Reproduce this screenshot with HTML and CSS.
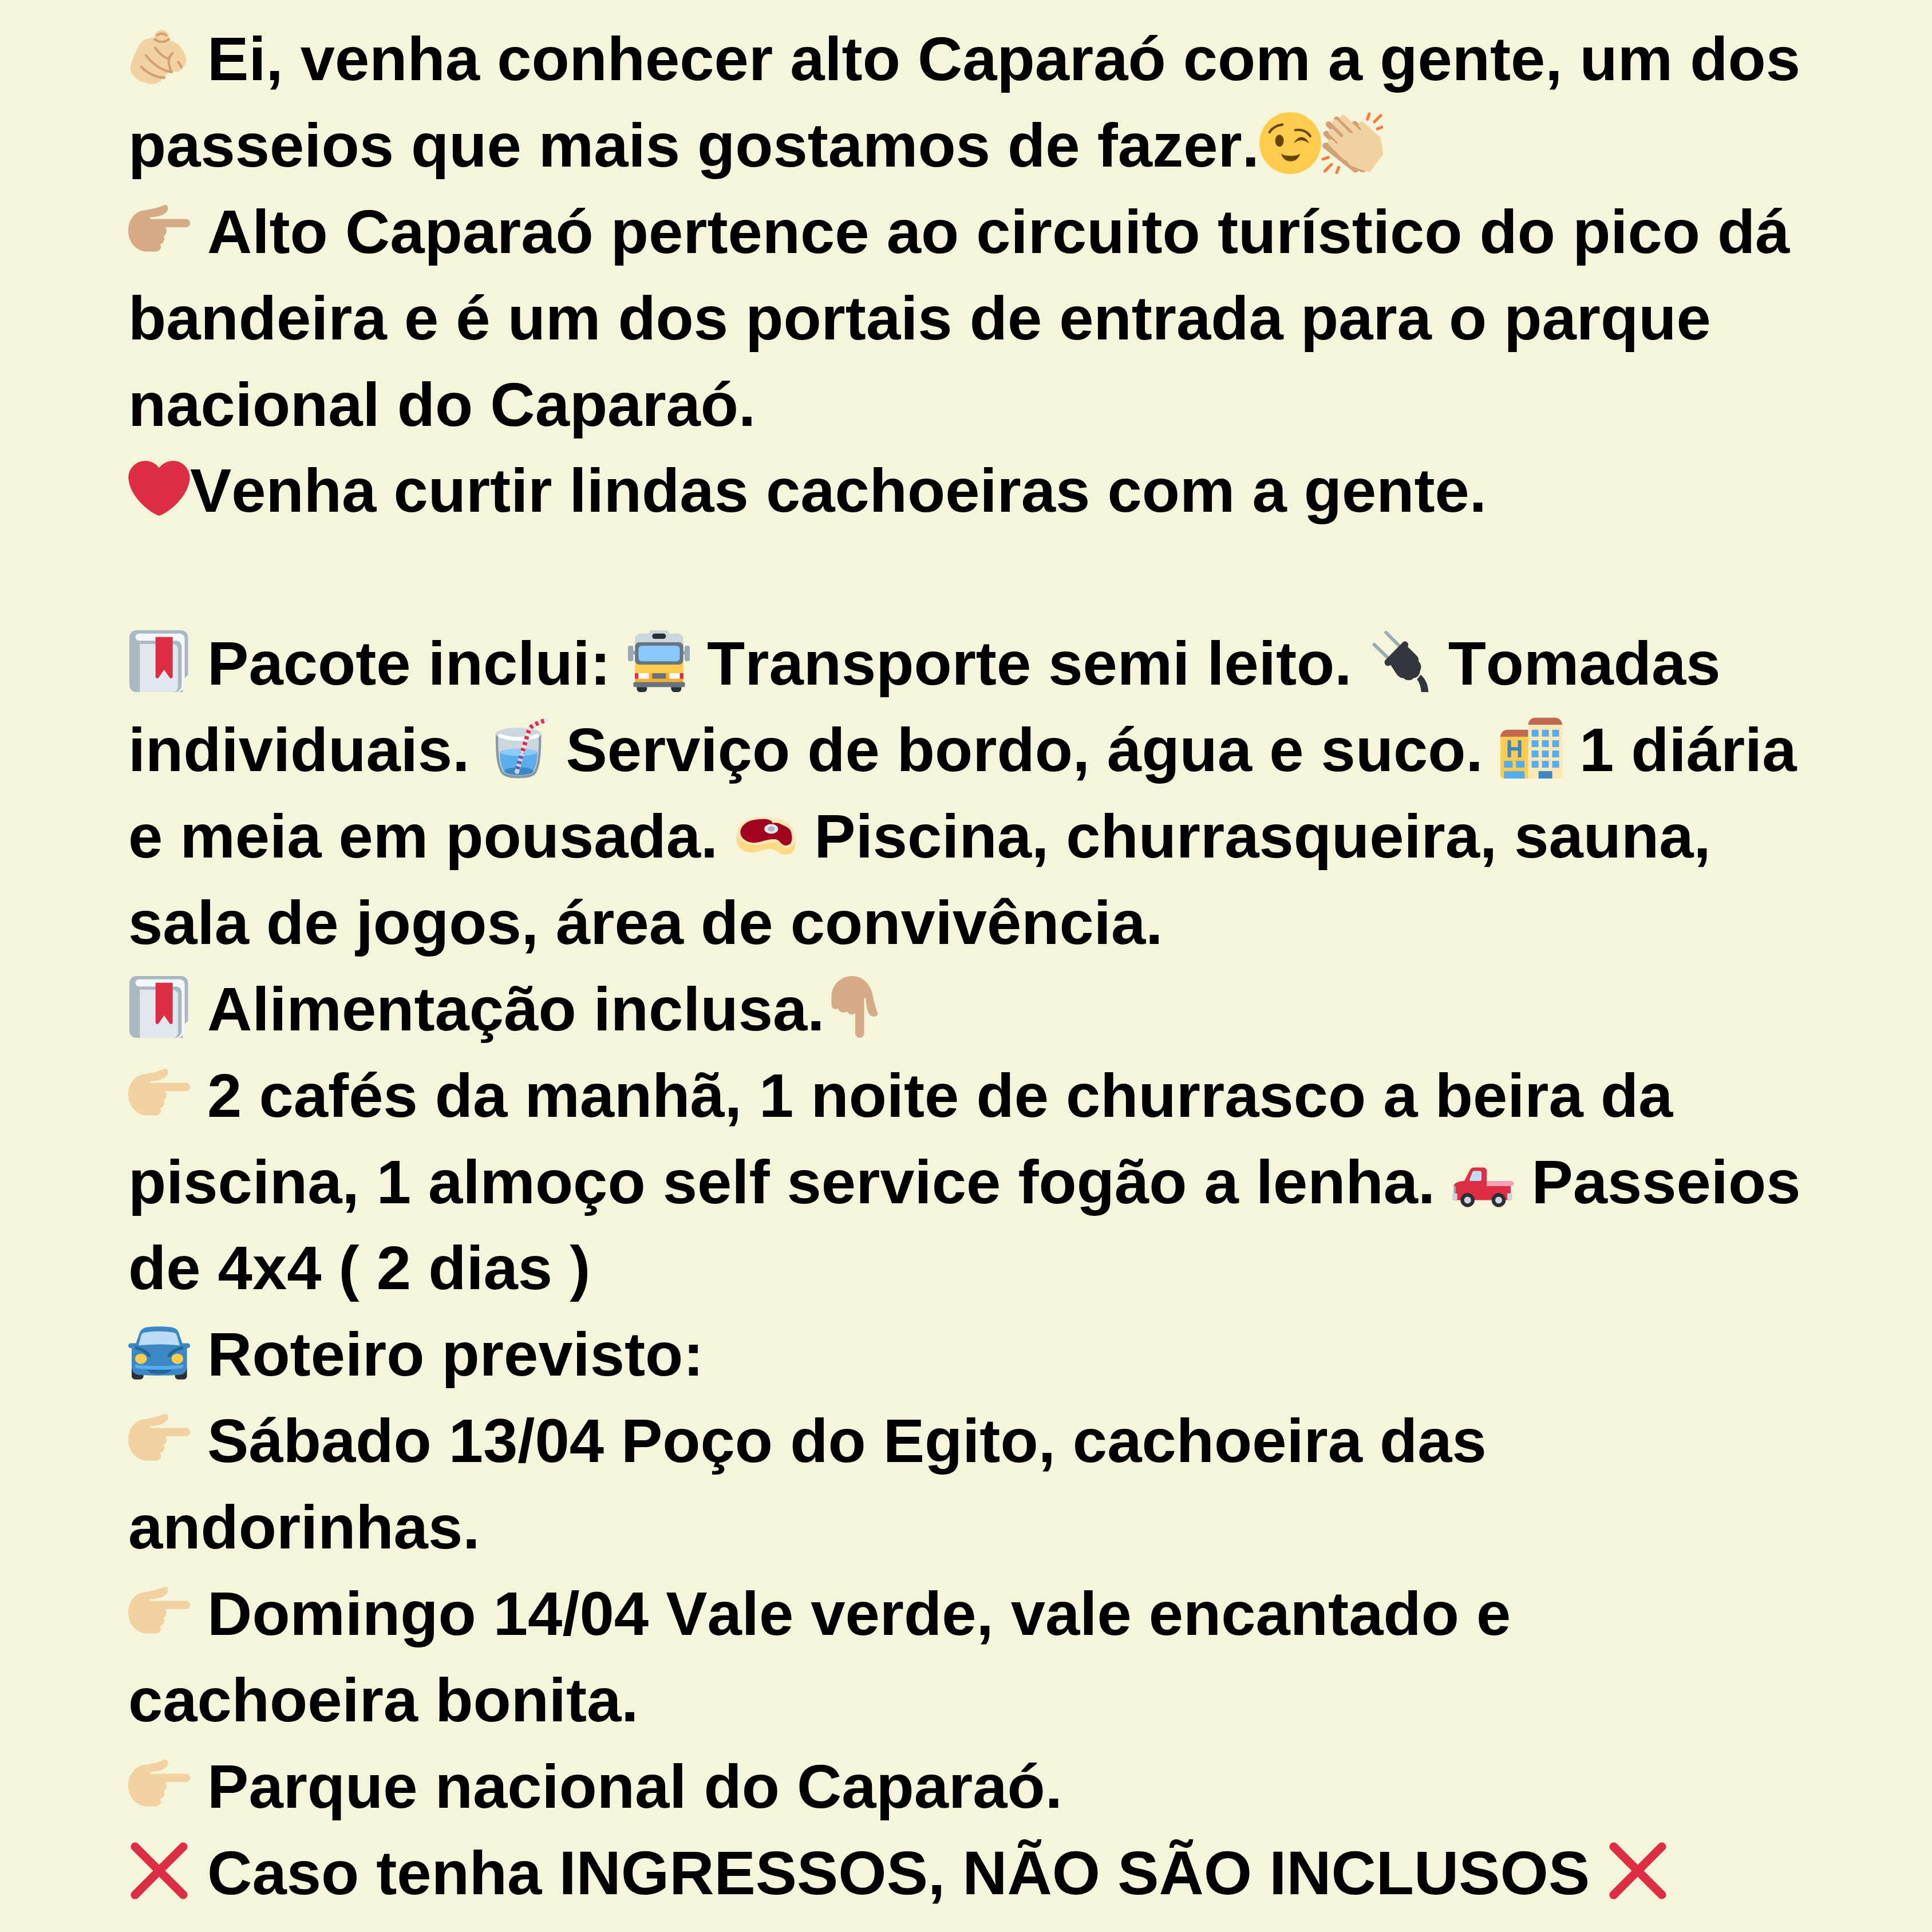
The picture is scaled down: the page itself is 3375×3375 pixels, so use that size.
FILE: index.html
```html
<!DOCTYPE html>
<html lang="pt-BR">
  <head>
    <meta charset="UTF-8" />
    <title>Alto Caparaó</title>
    <link rel="stylesheet" href="styles.css">
  </head>
  <body>
    <svg class="sprites" aria-hidden="true">
      <symbol id="hand-viewer" viewBox="0 0 36 36">
        <path fill="currentColor" d="M15 7.8C15 4.5 17 2.4 19.4 2.4c2.5 0 4.4 2 4.4 4.6 0 1 .3 1.5 1 1.8 2 .8 4 1.3 5.2 3 1.8 2.3 3.7 5 3.7 8 0 2.600-1.800 5-3.500 6.300-1.500 1-3.200.9-4.200.2-1.700.5-3.200 1.300-4.500 2.900-1.700 2.300-4 4.700-6.900 4.700-3.300 0-7.500-1.100-9.600-2.900-1.700-1.500-3.700-3.800-3.700-6.100 0-3.600 2.600-8.600 5-13.600.9-2 3-3.300 5.600-3.900 1.100-.2 1.600-.3 2.100-1z"/>
        <g fill="none" stroke="#D2A077" stroke-width="1.400" stroke-linecap="round">
          <path d="M15.400 7.800Q19.400 11 23.700 7.800"/>
          <path d="M16.700 5.600Q19.400 3.500 22.200 5.600"/>
          <path d="M15.600 12.800C17.500 15.500 20 18 23.100 19.200"/>
          <path d="M25.900 15.900C24 17.500 23 20 24 23.500Q24.400 25.500 25.300 26.700"/>
          <path d="M10.300 17.200C14 22 19 26 25.300 27"/>
          <path d="M7.600 23.900C11 27.500 15.500 30 21.100 30.300"/>
          <path d="M29.200 21.100L30.900 24.100"/>
        </g>
      </symbol>
      <symbol id="hand-right" viewBox="0 0 36 36">
        <path fill="currentColor" d="M8.900 6.800C13 6.300 17 5.300 20.500 3.900 22.200 3.200 23.200 4.200 23.200 5.600 23.200 8.500 19 10.700 13.300 10.800 12.500 10.900 12.500 11.800 13.300 11.800L33.600 11.800A2.450 2.450 0 0 1 33.600 16.700L21.600 16.700C22.800 18.500 22.500 21 20.500 21.900 21.800 23.500 20.600 26 18.600 26.600 19.800 28.500 18.500 30.800 16 30.800L11 30.800C4.500 30.800 0 25 0 18.800 0 12 4 7.500 8.900 6.800Z"/>
      </symbol>
      <symbol id="hand-down" viewBox="0 0 36 36">
        <path fill="currentColor" d="M16.100 0C9.500 0 4.200 5.500 4.200 11.700L4.200 16.700C4.200 19 6 19.600 8 19 8.800 21.500 11.800 21.800 13.200 20.600 14.500 22.800 16.800 23.200 18 21.400L18 33.400A2.600 2.600 0 0 0 23.200 33.400L23.200 13.200C23.200 12.500 24.100 12.500 24.100 13.200 24.300 18 25.300 21.500 26.700 22.800 28.200 24.200 31.600 23.500 31.100 21.700 29.600 17.500 28.800 14.500 28.300 11.700 27.300 5 22.500 0 16.100 0Z"/>
      </symbol>
      <symbol id="wink" viewBox="0 0 36 36">
        <circle fill="#FFCC4D" cx="18" cy="18" r="18"/>
        <ellipse fill="#664500" cx="11.700" cy="16.600" rx="2.500" ry="3.500"/>
        <path fill="#664500" d="M12.700 24C14 25.200 16 25.400 18.200 25.400 20.400 25.400 22.400 25.200 23.700 24 23.200 26.800 21 28.600 18.200 28.600 15.400 28.600 13.200 26.800 12.700 24Z"/>
        <g fill="none" stroke="#664500" stroke-width="1.400" stroke-linecap="round">
          <path d="M5.900 11.700Q8 8 13.400 7.200"/>
          <path d="M20.900 10.400Q26.500 9.500 29.600 13.900"/>
        </g>
        <path fill="#664500" d="M20 18C21.500 15.500 23 14.500 24.600 14.500 26.300 14.500 28 16 29 18 27 16.800 25.500 16.300 24.400 16.300 23 16.300 21.500 16.900 20 18Z"/>
      </symbol>
      <symbol id="clap" viewBox="0 0 36 36">
        <g fill="none" stroke="#FF7A3D" stroke-width="1.700" stroke-linecap="round">
          <path d="M28 1L26.900 4.100"/>
          <path d="M34.700 1.900L31 5.600"/>
          <path d="M35.700 8.600L32.700 9.700"/>
          <path d="M1 27.400L4.100 26.300"/>
          <path d="M2.100 34.300L6 30.400"/>
          <path d="M9 35.200L10.200 32.100"/>
        </g>
        <path fill="#D2A077" d="M1 20.500L23 34.800 25 35 27 33 12 16 2 18Z"/>
        <g fill="none" stroke="#D2A077" stroke-width="3.400" stroke-linecap="round">
          <path d="M2.400 19.500L20 33.500"/>
          <path d="M3 12.500L13 22"/>
          <path d="M4.300 7L15 17"/>
          <path d="M9 4.200L18 12"/>
          <path d="M19.500 6.800L24 11"/>
        </g>
        <path fill="#F3D2A2" d="M8 20L14 12 22 12 25.500 6.500 34.300 14.600 35.600 19.500 36 24.700 28.800 34.300Q28 35 26.500 34.500L22 33 17 31Z"/>
        <g fill="none" stroke="#F3D2A2" stroke-width="3.600" stroke-linecap="round">
          <path d="M12.800 3.400L22 12.500"/>
          <path d="M8.200 6L18 16"/>
          <path d="M6 11.500L16 21.500"/>
          <path d="M5.600 17.600L14 26"/>
          <path d="M23.500 7.300L30 14"/>
        </g>
      </symbol>
      <symbol id="heart" viewBox="0 0 36 36">
        <path fill="#DD2E44" d="M35.885 11.833c0-5.450-4.418-9.868-9.867-9.868-3.308 0-6.227 1.633-8.018 4.129-1.791-2.496-4.710-4.129-8.017-4.129-5.450 0-9.868 4.417-9.868 9.868 0 .772.098 1.520.266 2.241C1.751 22.587 11.216 31.568 18 34.034c6.783-2.466 16.249-11.447 17.617-19.959.170-.721.268-1.469.268-2.242z"/>
      </symbol>
      <symbol id="bookmark" viewBox="0 0 36 36">
        <path fill="#AAB8C2" d="M.7 4a4 4 0 0 1 4-4H30.800a4 4 0 0 1 4 4v22l-3 3v7H4.700a4 4 0 0 1-4-4z"/>
        <path fill="#F5F8FA" d="M6.300 1.900H30a2.900 2.900 0 0 1 2.900 2.900V31.500c0 2.500-2 4.500-4.500 4.500H6.800V6.100h-.5a2.100 2.100 0 0 1 0-4.200z"/>
        <path fill="#AAB8C2" d="M6.800 6.100H28a3.100 3.100 0 0 1 3.100 3.100V32a4 4 0 0 1-4 4H6.800z"/>
        <path fill="#E1E8ED" d="M6.800 8H26a3 3 0 0 1 3 3V33a3 3 0 0 1-3 3H6.800z"/>
        <path fill="#DD2E44" d="M15.900 3.900H25.900V27a1 1 0 0 1-1.800.6L20.900 23 17.700 27.600a1 1 0 0 1-1.800-.6z"/>
      </symbol>
      <symbol id="bus" viewBox="0 0 36 36">
        <path fill="#CCD6DD" d="M4.100 10V5a3.100 3.100 0 0 1 3.100-3.100H12.200V1.500A1.500 1.500 0 0 1 13.700 0H22.400A1.500 1.500 0 0 1 23.900 1.500V1.900H29.100A3.100 3.100 0 0 1 32.200 5V10Z"/>
        <rect fill="#292F33" x="14.100" y="1.900" width="8" height="3.100" rx="1.500"/>
        <rect fill="#99AAB5" x="0" y="9" width="3.100" height="9" rx="1"/>
        <rect fill="#99AAB5" x="33" y="9" width="3" height="9" rx="1"/>
        <rect fill="#99AAB5" x="3" y="12" width="1.200" height="2.200"/>
        <rect fill="#99AAB5" x="32.100" y="12" width="1.200" height="2.200"/>
        <rect fill="#FFCC4D" x="4.100" y="15" width="28.100" height="10"/>
        <rect fill="#FFAC33" x="4.100" y="25" width="28.100" height="6"/>
        <rect fill="#66757F" x="4.100" y="7" width="28.100" height="13" rx="2.500"/>
        <rect fill="#88C9F9" x="6.100" y="9" width="24.100" height="9.100" rx="2"/>
        <rect fill="#DD2E44" x="4" y="25" width="2.100" height="3.200"/>
        <rect fill="#FFF" x="6.100" y="25" width="6.100" height="3.200"/>
        <rect fill="#66757F" x="14.100" y="25" width="8" height="3.200"/>
        <rect fill="#FFF" x="24.100" y="25" width="6.100" height="3.200"/>
        <rect fill="#DD2E44" x="30.200" y="25" width="2.100" height="3.200"/>
        <rect fill="#66757F" x="3.100" y="30.200" width="30.100" height="2.900" rx="1"/>
        <path fill="#292F33" d="M5.100 33.100H11.100V34A2 2 0 0 1 9.100 36H7.100A2 2 0 0 1 5.100 34Z"/>
        <path fill="#292F33" d="M25.100 33.100H31.100V34A2 2 0 0 1 29.100 36H27.100A2 2 0 0 1 25.100 34Z"/>
      </symbol>
      <symbol id="plug" viewBox="0 0 36 36">
        <g fill="none" stroke="#99AAB5" stroke-width="1.900" stroke-linecap="round">
          <path d="M9.700 1.300L17.800 9.400"/>
          <path d="M2.800 8.300L11.100 16.300"/>
        </g>
        <path fill="#31373D" d="M30 25.800C32.800 28.500 34.400 32 34.400 36H30.300C30 33 29.200 30.500 27.800 28.600Z"/>
        <path fill="#31373D" d="M19.700 6.800A1.900 1.900 0 0 1 22.300 9.500L27.800 15C28.600 16 28.800 17 28.700 18.200 30.300 19.500 30.600 22 29.500 23.800 29.600 25.500 28 27.800 25.800 27.800 24.500 29.500 21.500 29.500 20 27.900 18.500 28 17.200 27 16.200 26L12.400 20.200A1.900 1.900 0 0 1 9.500 17.200Z"/>
      </symbol>
      <symbol id="cup" viewBox="0 0 36 36">
        <g transform="translate(2.900 0)">
          <path fill="#8899A6" d="M2.400 10C2.400 20 2.600 27 5.300 32.300 6.500 34.800 10 35.800 15.700 35.800 21.400 35.800 25 34.800 26.200 32.300 28.700 27 28.900 20 28.900 10Z"/>
          <path fill="#CCD6DD" d="M3.800 10.500C3.800 19 4 27 6.500 31.500 7.500 33.300 10 34.200 15.700 34.200 21.400 34.200 24 33.300 25 31.500 27.300 27 27.500 19 27.500 10.500Z"/>
          <ellipse fill="#CCD6DD" cx="15.650" cy="10" rx="13.250" ry="3.600"/>
          <path fill="#5DADEC" d="M4.800 20.500C4.900 24.500 5.400 28.500 6.900 31.200 7.800 33 10 33.900 15.700 33.900 21.400 33.900 23.600 33 24.600 31.200 26.100 28.500 26.600 24.500 26.700 20.500Z"/>
          <ellipse fill="#8CCAF7" cx="15.800" cy="20.700" rx="10.900" ry="2.100"/>
          <ellipse fill="#3B88C3" cx="15.900" cy="31.700" rx="8.500" ry="2.300"/>
          <path fill="none" stroke="#FFF" stroke-width="2.200" stroke-linecap="round" d="M5 11.100Q15.900 14.700 26.700 11.100"/>
          <path fill="none" stroke="#BBDDF5" stroke-width="2.600" stroke-linecap="round" d="M14.800 32L18.100 20"/>
          <path fill="none" stroke="#744EAA" stroke-width="2.600" stroke-dasharray="1.600 1.600" d="M15 30.500L18.100 20"/>
          <path fill="none" stroke="#E1E8ED" stroke-width="2.600" stroke-linecap="round" d="M18.100 20L21.400 9C22 6 24 4.600 31.800 1.900"/>
          <path fill="none" stroke="#DD2E44" stroke-width="2.600" stroke-dasharray="1.800 1.800" d="M18.100 20L21.400 9C22 6 24 4.600 31.800 1.900"/>
        </g>
      </symbol>
      <symbol id="hotel" viewBox="0 0 36 36">
        <path fill="#FFCC4D" d="M0 11.700H16.200V36H2A2 2 0 0 1 0 34Z"/>
        <path fill="#C1694F" d="M0 11.700A4.100 4.100 0 0 1 4.100 7.600H16.200V11.700Z"/>
        <path fill="#FFE8B6" d="M16.200 4.700H36V34A2 2 0 0 1 34 36H16.200Z"/>
        <path fill="#C1694F" d="M16.200 4.700A4.100 4.100 0 0 1 20.300.6H31.900A4.100 4.100 0 0 1 36 4.700Z"/>
        <g fill="#55ACEE">
          <rect x="18.200" y="7.600" width="4" height="4"/>
          <rect x="24.200" y="7.600" width="4" height="4"/>
          <rect x="30.200" y="7.600" width="4" height="4"/>
          <rect x="18.200" y="13.700" width="4" height="4"/>
          <rect x="24.200" y="13.700" width="4" height="4"/>
          <rect x="30.200" y="13.700" width="4" height="4"/>
          <rect x="18.200" y="19.700" width="4" height="4"/>
          <rect x="24.200" y="19.700" width="4" height="4"/>
          <rect x="30.200" y="19.700" width="4" height="4"/>
          <rect x="18.200" y="25.700" width="4" height="4"/>
          <rect x="24.200" y="25.700" width="4" height="4"/>
          <rect x="30.200" y="25.700" width="4" height="4"/>
          <rect x="2.100" y="25.700" width="5" height="4"/>
          <rect x="9.100" y="25.700" width="5" height="4"/>
          <rect x="2.100" y="31.700" width="12" height="4.300"/>
        </g>
        <g fill="#3B88C3">
          <rect x="22.200" y="31.700" width="8" height="4.300"/>
          <rect x="4.200" y="13.700" width="2" height="10"/>
          <rect x="10.200" y="13.700" width="2" height="10"/>
          <rect x="4.200" y="17.700" width="8" height="2"/>
        </g>
      </symbol>
      <symbol id="steak" viewBox="0 0 36 36">
        <path fill="#FFD983" d="M.9 17V21.700C1.200 24 2 25.500 3.600 26.800 6 28.500 8.500 28.900 10.900 28.700 14 28.500 17 26.700 19.800 26.700 22 26.700 23.500 27.500 24.800 28.300 26.500 29.500 28 30.200 29.800 30 32.500 29.800 34.500 28.500 34.900 26.100 35.200 24.500 35.100 22.500 35.100 21.100Z"/>
        <path fill="#FFE8B6" d="M.9 17C1.300 13.500 4.500 9.800 9.800 8.600 13 8 16.500 8 19.800 8.300 24.500 8.800 29.500 9.500 32 12.200 34.200 14.700 35.100 18 35.100 21.100 35.100 24.500 32.500 26.300 29.800 26.100 27 25.800 26 22.800 24.200 22.800 20 22.300 16.500 24.400 12 24.400 6.500 24.300 .9 21 .9 17Z"/>
        <path fill="#A0041E" d="M3.100 16.700C3.300 13.500 6.500 10.800 9.800 10 12.500 9.500 15.500 9 18.700 9.400 20.500 9.700 21.800 10.500 21.800 11.700 23.500 11.200 25.500 11.500 26.400 12.200 29.500 13.300 32 14.700 32.600 16.700 33.300 19 33.300 21 32.900 22.200 32.500 24 31 24.700 29.200 24.700 26.800 24.300 25.800 21.300 23.700 21.100 19 20.600 15 23.100 10.900 23.100 7 23 3 20.500 3.100 16.700Z"/>
        <ellipse fill="#E1E8ED" cx="21.100" cy="15" rx="4" ry="2.800"/>
        <ellipse fill="#AAB8C2" cx="21.100" cy="15" rx="2" ry="1.500"/>
      </symbol>
      <symbol id="pickup" viewBox="0 0 36 36">
        <path fill="#F7A1B4" d="M20 18.700H34.400A1.500 1.500 0 0 1 34.400 21.700H20Z"/>
        <path fill="#DD2E44" d="M.9 21.700C1 19.800 3.500 18.900 7 18.700L10.200 12.400C10.700 11.300 11.600 10.800 12.600 10.800H18.100A1.900 1.900 0 0 1 20 12.700V21.700H34V29.800H.9Z"/>
        <path fill="#BBDDF5" d="M12.600 12.800H16A1 1 0 0 1 17 13.800V17.700A1 1 0 0 1 16 18.700H10.800C10 18.700 9.900 18.200 10.200 17.500L11.600 13.800C12 13 12.200 12.800 12.600 12.800Z"/>
        <rect fill="#99AAB5" x=".9" y="21.700" width="1.100" height="4.100"/>
        <rect fill="#CCD6DD" x="0" y="25.800" width="2.900" height="4" rx=".7"/>
        <rect fill="#CCD6DD" x="32" y="25.800" width="3" height="4" rx=".7"/>
        <circle fill="#292F33" cx="8.900" cy="29.800" r="4.100"/>
        <circle fill="#CCD6DD" cx="8.900" cy="29.800" r="2"/>
        <circle fill="#292F33" cx="27" cy="29.800" r="4.100"/>
        <circle fill="#CCD6DD" cx="27" cy="29.800" r="2"/>
      </symbol>
      <symbol id="car" viewBox="0 0 36 36">
        <path fill="#292F33" d="M2 27H8.900V32A1.900 1.900 0 0 1 7 33.900H3.900A1.900 1.900 0 0 1 2 32Z"/>
        <path fill="#292F33" d="M27.200 27H34.200V32A1.900 1.900 0 0 1 32.300 33.900H29.100A1.900 1.900 0 0 1 27.200 32Z"/>
        <path fill="#3B88C3" d="M4.500 12.800L6.500 7C7.300 4.900 8.500 3.900 11 3.500 15 2.900 21 2.900 25 3.500 27.500 3.900 28.900 4.900 29.500 7L31.500 12.800H34.600A1.450 1.450 0 0 1 34.600 15.700H34.200V26C34.200 29 33 30.800 30 31.200 26 31.800 10 31.800 6 31.200 3.200 30.800 2 29 2 26V15.700H1.450A1.450 1.450 0 0 1 1.450 12.800Z"/>
        <path fill="#BBDDF5" d="M9.500 6.600C14 5.700 22 5.700 26.500 6.600 27.700 6.900 28.200 7.700 28.500 8.900L30 14.100C22 13.300 14 13.300 6.100 14.100L7.300 8.900C7.600 7.600 8.300 6.900 9.500 6.600Z"/>
        <path fill="none" stroke="#226699" stroke-width="1.800" stroke-linecap="round" d="M4.700 15.600C8 16.200 11 18 12.200 20"/>
        <path fill="none" stroke="#226699" stroke-width="1.800" stroke-linecap="round" d="M31.300 15.600C28 16.200 25 18 23.900 20"/>
        <ellipse fill="#FFCC4D" cx="7.400" cy="21.900" rx="3.400" ry="3"/>
        <ellipse fill="#FFCC4D" cx="28.600" cy="21.900" rx="3.400" ry="3"/>
        <path fill="#55ACEE" d="M3.900 25.700C3.900 24.900 4.500 25 5 25.300 12 26.300 24 26.300 31 25.300 31.700 25 32.200 24.900 32.200 25.700 32.200 26.800 31.500 27.300 30.500 27.500 23 28.400 13 28.400 5.500 27.500 4.500 27.300 3.900 26.800 3.900 25.700Z"/>
        <path fill="#226699" d="M11.100 28.100C15 28.500 21 28.500 25 28.100 24.500 30 21.500 30.800 18 30.800 14.500 30.800 11.500 30 11.100 28.100Z"/>
      </symbol>
      <symbol id="cross" viewBox="0 0 36 36">
        <path fill="#DD2E44" d="M21.533 18.002L33.768 5.768c.976-.976.976-2.559 0-3.535-.977-.977-2.559-.977-3.536 0L17.998 14.466 5.764 2.233c-.976-.977-2.560-.977-3.535 0-.977.976-.977 2.559 0 3.535l12.234 12.234L2.201 30.265c-.977.977-.977 2.559 0 3.535.488.488 1.128.732 1.768.732s1.280-.244 1.768-.732l12.262-12.263 12.234 12.234c.488.488 1.128.732 1.768.732.640 0 1.279-.244 1.768-.732.976-.977.976-2.559 0-3.535L21.533 18.002z"/>
      </symbol>
    </svg>
    <main class="post">
      <p class="line"><svg class="emoji skin-light"><use href="#hand-viewer"/></svg> Ei, venha conhecer alto Caparaó com a gente, um dos</p>
      <p class="line">passeios que mais gostamos de fazer.<svg class="emoji"><use href="#wink"/></svg><svg class="emoji"><use href="#clap"/></svg></p>
      <p class="line"><svg class="emoji skin-medium"><use href="#hand-right"/></svg> Alto Caparaó pertence ao circuito turístico do pico dá</p>
      <p class="line">bandeira e é um dos portais de entrada para o parque</p>
      <p class="line">nacional do Caparaó.</p>
      <p class="line"><svg class="emoji"><use href="#heart"/></svg>Venha curtir lindas cachoeiras com a gente.</p>
      <p class="line">&nbsp;</p>
      <p class="line"><svg class="emoji"><use href="#bookmark"/></svg> Pacote inclui: <svg class="emoji"><use href="#bus"/></svg> Transporte semi leito. <svg class="emoji"><use href="#plug"/></svg> Tomadas</p>
      <p class="line">individuais. <svg class="emoji"><use href="#cup"/></svg> Serviço de bordo, água e suco. <svg class="emoji"><use href="#hotel"/></svg> 1 diária</p>
      <p class="line">e meia em pousada. <svg class="emoji"><use href="#steak"/></svg> Piscina, churrasqueira, sauna,</p>
      <p class="line">sala de jogos, área de convivência.</p>
      <p class="line"><svg class="emoji"><use href="#bookmark"/></svg> Alimentação inclusa.<svg class="emoji skin-medium"><use href="#hand-down"/></svg></p>
      <p class="line"><svg class="emoji skin-light"><use href="#hand-right"/></svg> 2 cafés da manhã, 1 noite de churrasco a beira da</p>
      <p class="line">piscina, 1 almoço self service fogão a lenha. <svg class="emoji"><use href="#pickup"/></svg> Passeios</p>
      <p class="line">de 4x4 ( 2 dias )</p>
      <p class="line"><svg class="emoji"><use href="#car"/></svg> Roteiro previsto:</p>
      <p class="line"><svg class="emoji skin-light"><use href="#hand-right"/></svg> Sábado 13/04 Poço do Egito, cachoeira das</p>
      <p class="line">andorinhas.</p>
      <p class="line"><svg class="emoji skin-light"><use href="#hand-right"/></svg> Domingo 14/04 Vale verde, vale encantado e</p>
      <p class="line">cachoeira bonita.</p>
      <p class="line"><svg class="emoji skin-light"><use href="#hand-right"/></svg> Parque nacional do Caparaó.</p>
      <p class="line"><svg class="emoji"><use href="#cross"/></svg> Caso tenha INGRESSOS, NÃO SÃO INCLUSOS <svg class="emoji"><use href="#cross"/></svg></p>
    </main>
  </body>
</html>
```
FILE: styles.css
```css
html,
body {
  margin: 0;
  background: #f5f5dc;
}
.sprites {
  display: block;
  width: 0;
  height: 0;
}
.post {
  width: 3375px;
  height: 3375px;
  box-sizing: border-box;
  padding: 28px 0 0 224px;
  overflow: hidden;
  color: #000;
  font-family: 'Liberation Sans', Arial, sans-serif;
  font-size: 108.4px;
  font-weight: 700;
  font-kerning: none;
}
.line {
  margin: 0;
  height: 150.9px;
  line-height: 150.9px;
  white-space: pre;
}
.emoji {
  width: 108px;
  height: 108px;
  vertical-align: -13px;
}
.skin-light {
  color: #f3d2a2;
}
.skin-medium {
  color: #d5ab88;
}
```
